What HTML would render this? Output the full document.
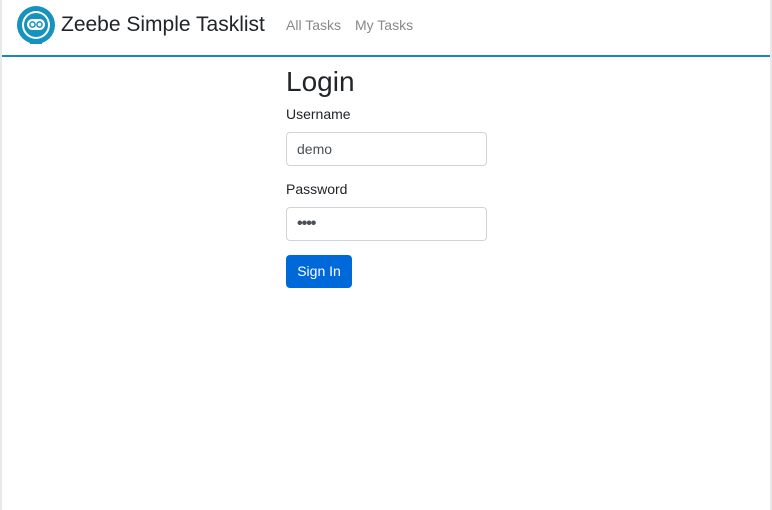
<!DOCTYPE html>
<html><head><meta charset="utf-8"><style>
*{box-sizing:border-box}
body{margin:0;width:772px;height:510px;background:#fff;font-family:"Liberation Sans",sans-serif;color:#212529;position:relative;overflow:hidden}
.lb{position:absolute;left:0;top:0;width:2px;height:510px;background:#e9e9e9}
.rb{position:absolute;right:0;top:0;width:2px;height:510px;background:#e9e9e9}
.hdr{position:absolute;left:2px;right:2px;top:0;height:57px;border-bottom:2px solid #1a8ab5}
.logo{position:absolute;left:14px;top:6px}
.brand{position:absolute;left:59px;top:12px;font-size:21px;color:#212529}
.nav{position:absolute;top:17px;font-size:14px;color:#888}
h1{position:absolute;left:286px;top:66px;margin:0;font-size:28px;font-weight:400}
label{position:absolute;left:286px;font-size:14px}
.in{position:absolute;left:286px;width:201px;height:34px;border:1px solid #ced4da;border-radius:4px;padding:0 10px;font-size:14px;line-height:32px;color:#495057}
.btn{position:absolute;left:286px;top:255px;width:66px;height:33px;background:#0069d9;border-radius:4px;color:#fff;font-size:14px;line-height:33px;text-align:center}
</style></head><body>
<div class="lb"></div><div class="rb"></div>
<div class="hdr">
<svg class="logo" width="40" height="40" viewBox="0 0 40 40">
<circle cx="20" cy="19" r="19" fill="#1592bd"/>
<circle cx="20" cy="19" r="14" fill="#fff"/>
<circle cx="20" cy="19" r="12" fill="#1592bd"/>
<rect x="11" y="13" width="18" height="11" rx="5.5" fill="#fff"/>
<circle cx="16.5" cy="18.5" r="2.6" fill="none" stroke="#1592bd" stroke-width="1.5"/>
<circle cx="23.5" cy="18.5" r="2.6" fill="none" stroke="#1592bd" stroke-width="1.5"/>
<rect x="14" y="34" width="12" height="4" fill="#1592bd"/>
</svg>
<div class="brand" style="top:13px">Zeebe Simple Tasklist</div>
<div class="nav" style="left:284px">All Tasks</div>
<div class="nav" style="left:353px">My Tasks</div>
</div>
<h1>Login</h1>
<label style="top:106px">Username</label>
<div class="in" style="top:132px">demo</div>
<label style="top:181px">Password</label>
<div class="in" style="top:207px;font-size:16px;font-weight:bold;letter-spacing:-1px">••••</div>
<div class="btn">Sign In</div>
</body></html>
